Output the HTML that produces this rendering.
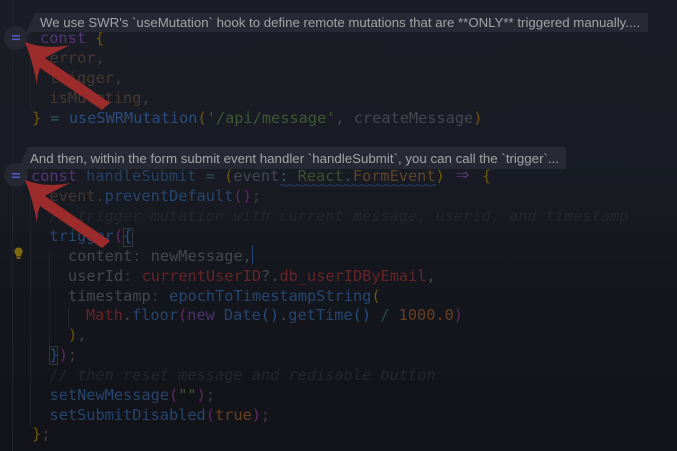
<!DOCTYPE html>
<html><head><meta charset="utf-8"><style>
html,body{margin:0;padding:0;background:#191c24;width:677px;height:451px;overflow:hidden}
svg{display:block;position:absolute;left:0;top:0}
.c{font-family:"DejaVu Sans Mono","Liberation Mono",monospace;font-size:15.28px;white-space:pre;filter:blur(.3px)}
.t{font-family:"Liberation Sans",sans-serif;font-size:13px;fill:#a2a4a8;white-space:pre;filter:blur(.2px)}
</style></head><body>
<svg width="677" height="451" viewBox="0 0 677 451" xmlns="http://www.w3.org/2000/svg">
<defs><linearGradient id="bg" x1="0" y1="0" x2="0" y2="1"><stop offset="0" stop-color="#1a1d25"/><stop offset=".35" stop-color="#191c24"/><stop offset=".6" stop-color="#15171e"/><stop offset="1" stop-color="#121318"/></linearGradient></defs>
<rect width="677" height="451" fill="url(#bg)"/>
<g fill="#20232b">
<rect x="12" y="0" width="1" height="451"/>
<rect x="30" y="30" width="1" height="80"/>
<rect x="30" y="185" width="1" height="240"/>
<rect x="49" y="250" width="1" height="96"/>
<rect x="68" y="307" width="1" height="20"/>
</g>
<g class="c" fill="#4c4f57">
<text x="40" y="43"><tspan fill="#533674">const</tspan> <tspan fill="#6d5510">{</tspan></text>
<text x="49.500" y="63" fill="#453730">error<tspan fill="#3a3d44">,</tspan></text>
<text x="49.500" y="83" fill="#453730">trigger<tspan fill="#3a3d44">,</tspan></text>
<text x="49.500" y="103" fill="#453730">isMutating<tspan fill="#3a3d44">,</tspan></text>
<text x="32" y="123" fill="#43464e"><tspan fill="#6d5510">}</tspan> <tspan fill="#2f565c">=</tspan> <tspan fill="#2a4c7c">useSWRMutation</tspan><tspan fill="#6d5510">(</tspan><tspan fill="#3d5733">'/api/message'</tspan>, createMessage<tspan fill="#6d5510">)</tspan></text>

<text x="31" y="181" fill="#43464e"><tspan fill="#533674">const</tspan> <tspan fill="#25405f">handleSubmit</tspan> <tspan fill="#264c50">=</tspan> <tspan fill="#6d5510">(</tspan>event<tspan fill="#2f565c">:</tspan> <tspan fill="#3f4d31">React</tspan>.<tspan fill="#5c452a">FormEvent</tspan><tspan fill="#6d5510">)</tspan><tspan x="456" fill="#533674" font-size="22">⇒</tspan><tspan x="482" fill="#6d5510">{</tspan></text>
<text x="49.500" y="201" fill="#423530">event<tspan fill="#3a3d44">.</tspan><tspan fill="#26456e">preventDefault</tspan><tspan fill="#5c2960">()</tspan><tspan fill="#3a3d44">;</tspan></text>
<text x="49.500" y="221" fill="#24262d" font-style="italic">// trigger mutation with current message, userid, and timestamp</text>
<text x="49.500" y="241" fill="#26456e">trigger<tspan fill="#5c2960">(</tspan><tspan fill="#264e7e">{</tspan></text>
<text x="68" y="261" fill="#44474d">content<tspan fill="#35383e">:</tspan> newMessage,</text>
<text x="68" y="281" fill="#44474d">userId<tspan fill="#35383e">:</tspan> <tspan fill="#662429">currentUserID</tspan><tspan fill="#44474d">?.</tspan><tspan fill="#662429">db_userIDByEmail</tspan>,</text>
<text x="68" y="301" fill="#44474d">timestamp<tspan fill="#35383e">:</tspan> <tspan fill="#26456e">epochToTimestampString</tspan><tspan fill="#6d5510">(</tspan></text>
<text x="86" y="320" fill="#44474d"><tspan fill="#662429">Math</tspan>.<tspan fill="#26456e">floor</tspan><tspan fill="#5c2960">(</tspan><tspan fill="#4b3069">new</tspan> <tspan fill="#26456e">Date</tspan><tspan fill="#264e7e">()</tspan>.<tspan fill="#26456e">getTime</tspan><tspan fill="#264e7e">()</tspan> <tspan fill="#264c50">/</tspan> <tspan fill="#683f20">1000.0</tspan><tspan fill="#5c2960">)</tspan></text>
<text x="68" y="340" fill="#3a3d44"><tspan fill="#6d5510">)</tspan>,</text>
<text x="49.500" y="360" fill="#3a3d44"><tspan fill="#264e7e">}</tspan><tspan fill="#5c2960">)</tspan>;</text>
<text x="49.500" y="380" fill="#24262c" font-style="italic">// then reset message and redisable button</text>
<text x="49.500" y="400" fill="#26456e">setNewMessage<tspan fill="#5c2960">(</tspan><tspan fill="#3d5733">""</tspan><tspan fill="#5c2960">)</tspan><tspan fill="#3a3d44">;</tspan></text>
<text x="49.500" y="420" fill="#26456e">setSubmitDisabled<tspan fill="#5c2960">(</tspan><tspan fill="#683f20">true</tspan><tspan fill="#5c2960">)</tspan><tspan fill="#3a3d44">;</tspan></text>
<text x="32" y="439" fill="#3a3d44"><tspan fill="#6d5510">}</tspan>;</text>
</g>
<path d="M280 185.500q2-1.600 4 0t4 0 4 0 4 0 4 0 4 0 4 0 4 0 4 0 4 0 4 0 4 0 4 0 4 0 4 0 4 0 4 0 4 0 4 0 4 0 4 0 4 0 4 0 4 0 4 0 4 0 4 0 4 0 4 0 4 0 4 0 4 0 4 0 4 0 4 0 4 0 4 0 4 0 4 0" fill="none" stroke="#243f6e" stroke-width="1"/>
<rect x="123.500" y="228.500" width="9" height="18" fill="none" stroke="#33363e"/>
<rect x="49.500" y="346.500" width="8" height="18" fill="none" stroke="#33363e"/>
<rect x="252" y="245" width="1" height="19" fill="#264475"/>
<path d="M18.500 247.500a4 4 0 0 1 3.500 6c-.8 1.200-1.200 1.800-1.300 3h-4.400c-.1-1.200-.5-1.800-1.300-3a4 4 0 0 1 3.500-6z" fill="#7d690f"/><rect x="16.500" y="257" width="4" height="2" fill="#6d5a0e"/>

<circle cx="16" cy="38" r="12" fill="#252833"/>
<path d="M24 38L35 13H648V32H30Z" fill="#272a34"/>
<text class="t" x="40" y="27" textLength="600" lengthAdjust="spacingAndGlyphs">We use SWR's `useMutation` hook to define remote mutations that are **ONLY** triggered manually....</text>
<g fill="#5357c4"><rect x="12" y="35" width="8" height="1.600"/><rect x="12" y="38.500" width="8" height="1.600"/></g>

<circle cx="16" cy="175" r="12" fill="#252833"/>
<path d="M18 168L28 147H566V169H18Z" fill="#272a34"/>
<text class="t" x="30" y="163" textLength="529" lengthAdjust="spacingAndGlyphs">And then, within the form submit event handler `handleSubmit`, you can call the `trigger`...</text>
<g fill="#5357c4"><rect x="12" y="173" width="8" height="1.600"/><rect x="12" y="176.500" width="8" height="1.600"/></g>

<g fill="#9c2b2b">
<path d="M25 42Q45 50 70 45Q56 52 45 58L110 103L102 110L40 68Q37 76 37 85Q33 62 25 42Z"/>
<path d="M25 180Q45 188 70 183Q56 190 45 196L110 241L102 248L40 206Q37 214 37 223Q33 200 25 180Z"/>
</g>
</svg>
</body></html>
